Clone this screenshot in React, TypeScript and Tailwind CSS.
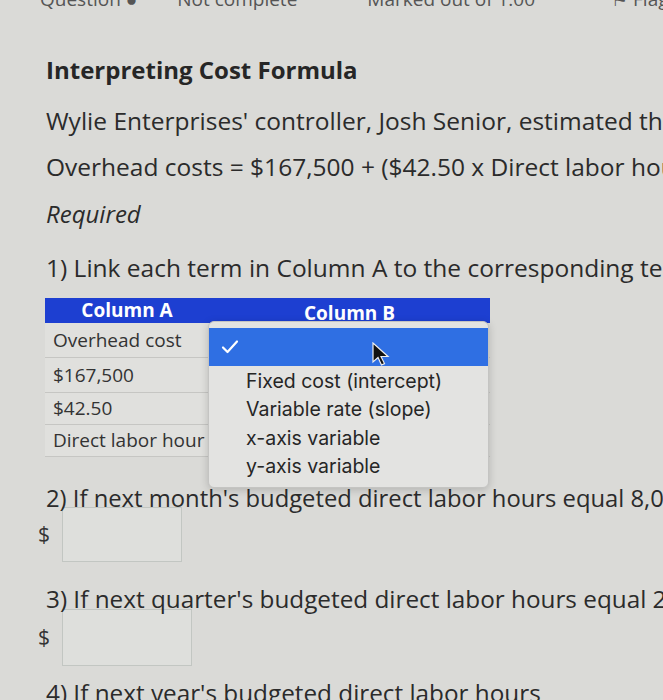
import React from "react";

const rows = ["Overhead cost", "$167,500", "$42.50", "Direct labor hour"];
const rowHeights = ["h-[35px]", "h-[35px]", "h-[32px]", "h-[32px]"];
const options = [
  "Fixed cost (intercept)",
  "Variable rate (slope)",
  "x-axis variable",
  "y-axis variable",
];

function Cursor() {
  return (
    <svg width="22" height="26" viewBox="0 0 22 26" className="absolute left-[162px] top-[14px]">
      <path d="M2 1 L2 20 L7 15.5 L10.5 23 L13.5 21.6 L10 14.5 L17 14.5 Z" fill="#111" stroke="#eee" strokeWidth="1.2" />
    </svg>
  );
}

function Dropdown() {
  return (
    <div className="absolute left-[163px] top-[23px] w-[281px] h-[167px] rounded-[6px] bg-[#e3e3e1] border border-[#c4c4c2] shadow-[0_2px_8px_rgba(0,0,0,0.18)] pt-[6px] font-['Inter',sans-serif] text-[19.5px] text-[#262626] z-20">
      <div className="relative h-[38px] bg-[#2f6fe3] flex items-center pl-[12px]">
        <svg width="18" height="16" viewBox="0 0 18 16">
          <path d="M2 8.5 L6.5 13 L16 2.5" fill="none" stroke="#fff" strokeWidth="2.2" strokeLinecap="round" strokeLinejoin="round" />
        </svg>
        <Cursor />
      </div>
      <div className="pl-[37px] pt-[1px] flex flex-col">
        {options.map((o) => (
          <div key={o} className="h-[28.5px] flex items-center whitespace-nowrap">
            {o}
          </div>
        ))}
      </div>
    </div>
  );
}

function AnswerBox({ w, h, mt }: { w: string; h: string; mt: string }) {
  return (
    <div className={`flex items-center ${mt} -ml-[8px]`}>
      <span className="w-[24px] text-[21px] text-[#333]">$</span>
      <div className={`${w} ${h} border border-[#c2c6c2] bg-[#dedfdc]`} />
    </div>
  );
}

export default function App() {
  return (
    <div className="w-[663px] h-[700px] overflow-hidden bg-[#dadad7] font-['Open_Sans',sans-serif] text-[#2b2b2b] pl-[46px]">
      <div className="-mt-[14px] h-[26px] flex items-center text-[19px] text-[#555] gap-[40px] -ml-[6px] whitespace-nowrap">
        <span>Question ●</span>
        <span>Not complete</span>
        <span className="ml-[30px]">Marked out of 1.00</span>
        <span className="ml-[36px]">⚑ Flag question</span>
      </div>

      <h1 className="mt-[42px] text-[24px] font-bold leading-[32px] text-[#262626]">Interpreting Cost Formula</h1>
      <p className="mt-[20px] text-[24.5px] leading-[30px] whitespace-nowrap">
        Wylie Enterprises' controller, Josh Senior, estimated the following cost formula
      </p>
      <p className="mt-[16px] text-[24.5px] leading-[30px] whitespace-nowrap">
        Overhead costs = $167,500 + ($42.50 x Direct labor hours)
      </p>
      <p className="mt-[17px] text-[24px] leading-[30px] italic">Required</p>
      <p className="mt-[24px] text-[24.5px] leading-[30px] whitespace-nowrap">
        1) Link each term in Column A to the corresponding term in Column B.
      </p>

      <div className="relative mt-[15px] -ml-[1px] w-[445px]">
        <div className="h-[25px] bg-[#1d3fd1] flex text-white font-bold text-[19px]">
          <div className="w-[164px] flex items-center justify-center">Column A</div>
          <div className="flex-1 flex items-center justify-center pt-[6px]">Column B</div>
        </div>
        {rows.map((r, i) => (
          <div key={r} className={`${rowHeights[i]} flex border-b border-[#c6c6c3]`}>
            <div className="w-[164px] flex items-center pl-[8px] text-[19px] text-[#333] bg-[#e0e0dd] whitespace-nowrap overflow-hidden">
              {r}
            </div>
            <div className="flex-1" />
          </div>
        ))}
        <Dropdown />
      </div>

      <p className="relative z-10 mt-[26px] text-[23.8px] leading-[30px] whitespace-nowrap">
        2) If next month's budgeted direct labor hours equal 8,000
      </p>
      <AnswerBox w="w-[120px]" h="h-[55px]" mt="-mt-[6px]" />

      <p className="relative z-10 mt-[22px] text-[24.3px] leading-[30px] whitespace-nowrap">
        3) If next quarter's budgeted direct labor hours equal 26,000
      </p>
      <AnswerBox w="w-[130px]" h="h-[57px]" mt="-mt-[5px]" />

      <p className="mt-[12px] text-[24.3px] leading-[30px] whitespace-nowrap">
        4) If next year's budgeted direct labor hours
      </p>
    </div>
  );
}
